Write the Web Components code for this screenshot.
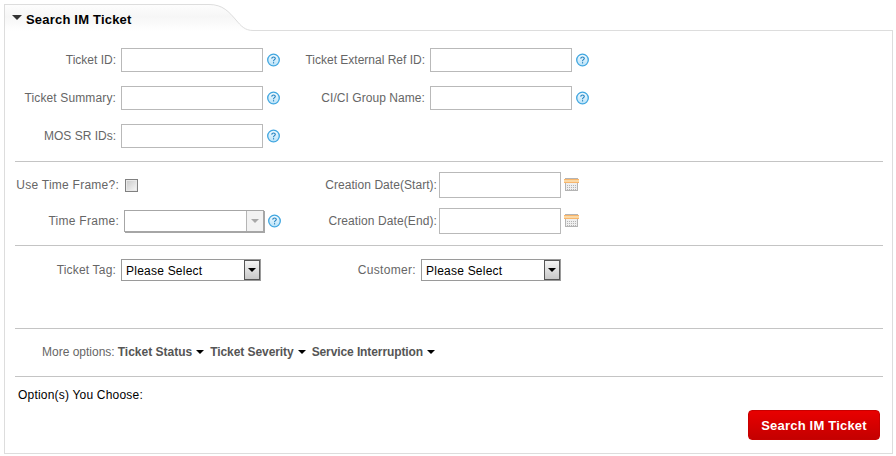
<!DOCTYPE html>
<html>
<head>
<meta charset="utf-8">
<title>Search IM Ticket</title>
<style>
  html, body { margin: 0; background: #fff; }
  body { font: 12px "Liberation Sans", Arial, sans-serif; color: #666; }
</style>
</head>
<body>
<im-panel heading="Search IM Ticket">
  <im-section style="--pad: 17px 0 13px; --gap: 14px">
    <im-row>
      <im-field label="Ticket ID:" style="--w: 101px"><im-input></im-input><im-help></im-help></im-field>
      <im-field label="Ticket External Ref ID:" style="--w: 125px; --left: 20px"><im-input></im-input><im-help></im-help></im-field>
    </im-row>
    <im-row>
      <im-field label="Ticket Summary:" style="--w: 101px; --ls: .13px"><im-input></im-input><im-help></im-help></im-field>
      <im-field label="CI/CI Group Name:" style="--w: 125px; --left: 20px; --ls: .06px"><im-input></im-input><im-help></im-help></im-field>
    </im-row>
    <im-row>
      <im-field label="MOS SR IDs:" style="--w: 101px"><im-input></im-input><im-help></im-help></im-field>
    </im-row>
  </im-section>
  <im-section style="--pad: 10px 0 11px; --gap: 10px">
    <im-row>
      <im-field label="Use Time Frame?:" style="--w: 104px; --fw: 267px; --cgap: 6px; --ls: .25px"><im-check></im-check></im-field>
      <im-field label="Creation Date(Start):" style="--w: 121px; --left: 34px; --cgap: 2px; --ls: .05px"><im-input style="--iw: 122px; --ih: 26px"></im-input><im-calendar></im-calendar></im-field>
    </im-row>
    <im-row>
      <im-field label="Time Frame:" style="--w: 104px; --fw: 267px; --ls: .27px"><im-select disabled style="--sw: 140px; --sh: 22px"></im-select><im-help></im-help></im-field>
      <im-field label="Creation Date(End):" style="--w: 121px; --left: 34px; --cgap: 2px; --ls: .1px"><im-input style="--iw: 122px; --ih: 26px"></im-input><im-calendar></im-calendar></im-field>
    </im-row>
  </im-section>
  <im-section style="--pad: 13px 0 47px; --gap: 0px">
    <im-row>
      <im-field label="Ticket Tag:" style="--w: 101px; --fw: 246px; --ls: .18px"><im-select text="Please Select"></im-select></im-field>
      <im-field label="Customer:" style="--w: 155px; --ls: .33px"><im-select text="Please Select"></im-select></im-field>
    </im-row>
  </im-section>
  <im-section style="--pad: 15px 0 16px; --gap: 0px">
    <im-more label="More options:">
      <im-menu>Ticket Status</im-menu>
      <im-menu style="--ls: -.07px">Ticket Severity</im-menu>
      <im-menu style="--ls: -.1px">Service Interruption</im-menu>
    </im-more>
  </im-section>
  <im-footer label="Option(s) You Choose:">
    <im-button>Search IM Ticket</im-button>
  </im-footer>
</im-panel>

<script>
class ImPanel extends HTMLElement {
  constructor() {
    super();
    this.attachShadow({ mode: 'open' }).innerHTML = `
      <style>
        :host { display: block; margin: 4px 3px 0 4px; width: 889px; }
        .head { display: flex; height: 27px; }
        .tab {
          width: 205px; box-sizing: border-box; padding: 7px 0 0 7px;
          border-top: 1px solid #ddd; border-left: 1px solid #ddd;
          background: linear-gradient(#fdfdfd, #f6f6f6 45%, #fff);
          font-weight: bold; font-size: 13px; color: #000; letter-spacing: .2px;
          display: flex; gap: 4px; white-space: nowrap;
        }
        .tab i {
          width: 0; height: 0; margin-top: 3px;
          border: 5px solid transparent; border-top: 5px solid #333; border-bottom: 0;
        }
        .curve { display: block; width: 44px; height: 27px; flex: none; }
        .rest { flex: 1; border-bottom: 1px solid #ddd; }
        .body {
          border: 1px solid #ddd; border-top: 0;
          padding: 0 9px 0 10px; height: 423px; box-sizing: border-box;
        }
      </style>
      <div class="head">
        <div class="tab"><i></i><span id="t"></span></div>
        <svg class="curve" viewBox="0 0 44 27">
          <defs><linearGradient id="g" x1="0" y1="0" x2="0" y2="1">
            <stop offset="0" stop-color="#fdfdfd"/><stop offset=".45" stop-color="#f6f6f6"/><stop offset="1" stop-color="#fff"/>
          </linearGradient></defs>
          <path d="M0 .5C14 .5 20 8 27 16C32 22 36 26.500 44 26.500V27H0Z" fill="url(#g)"/>
          <path d="M0 .5C14 .5 20 8 27 16C32 22 36 26.500 44 26.500" fill="none" stroke="#ddd"/>
        </svg>
        <div class="rest"></div>
      </div>
      <div class="body"><slot></slot></div>`;
    this.shadowRoot.getElementById('t').textContent = this.getAttribute('heading');
  }
}

class ImSection extends HTMLElement {
  constructor() {
    super();
    this.attachShadow({ mode: 'open' }).innerHTML = `
      <style>
        :host {
          display: flex; flex-direction: column; gap: var(--gap);
          padding: var(--pad); border-bottom: 1px solid #c4c4c4;
        }
      </style>
      <slot></slot>`;
  }
}

class ImRow extends HTMLElement {
  constructor() {
    super();
    this.attachShadow({ mode: 'open' }).innerHTML = `
      <style>:host { display: flex; align-items: center; }</style>
      <slot></slot>`;
  }
}

class ImField extends HTMLElement {
  constructor() {
    super();
    this.attachShadow({ mode: 'open' }).innerHTML = `
      <style>
        :host {
          display: flex; align-items: center; flex: none;
          width: var(--fw, auto); margin-left: var(--left, 0);
        }
        label {
          width: var(--w); flex: none; text-align: right; white-space: nowrap;
          margin-right: var(--cgap, 5px); letter-spacing: var(--ls, 0);
        }
        .ctl { display: flex; align-items: center; gap: 4px; }
      </style>
      <label></label><div class="ctl"><slot></slot></div>`;
    this.shadowRoot.querySelector('label').textContent = this.getAttribute('label');
  }
}

class ImInput extends HTMLElement {
  constructor() {
    super();
    this.attachShadow({ mode: 'open' }).innerHTML = `
      <style>
        :host {
          display: block; box-sizing: border-box; flex: none;
          width: var(--iw, 142px); height: var(--ih, 24px);
          border: 1px solid #b9b9b9; background: #fff;
        }
      </style>`;
  }
}

class ImHelp extends HTMLElement {
  constructor() {
    super();
    this.attachShadow({ mode: 'open' }).innerHTML = `
      <style>:host { display: block; width: 13px; height: 14px; flex: none; } svg { display: block; }</style>
      <svg width="13" height="14" viewBox="0 0 13 14">
        <defs><linearGradient id="h" x1="0" y1="0" x2="0" y2="1">
          <stop offset="0" stop-color="#f4fbff"/><stop offset="1" stop-color="#b9e2f8"/>
        </linearGradient></defs>
        <circle cx="6.500" cy="7" r="5.800" fill="url(#h)" stroke="#3fa6e0" stroke-width="1.300"/>
        <path d="M4.700 5.600C4.800 4.500 5.500 4 6.500 4C7.600 4 8.300 4.600 8.300 5.500C8.300 6.700 6.500 6.700 6.500 8.200" fill="none" stroke="#1f7fbe" stroke-width="1.100"/>
        <rect x="6" y="9.200" width="1.100" height="1.200" fill="#1f7fbe"/>
      </svg>`;
  }
}

class ImCalendar extends HTMLElement {
  constructor() {
    super();
    this.attachShadow({ mode: 'open' }).innerHTML = `
      <style>:host { display: block; width: 15px; height: 13px; flex: none; margin: -1px 0 0 -1px; } svg { display: block; }</style>
      <svg width="15" height="13" viewBox="0 0 15 13" shape-rendering="crispEdges">
        <rect x="1.500" y=".5" width="12" height="12" fill="#efefef" stroke="#b4b4b4"/>
        <rect x="0" y="1" width="15" height="4" fill="#fbd9a6"/>
        <rect x="0" y="1" width="15" height="1" fill="#f8b66c"/>
        <rect x="0" y="4" width="15" height="1" fill="#f8b66c"/>
        <path d="M3 7h9M3 9h9M3 11h9" stroke="#b4b4b4" stroke-dasharray="1 1"/>
      </svg>`;
  }
}

class ImCheck extends HTMLElement {
  constructor() {
    super();
    this.attachShadow({ mode: 'open' }).innerHTML = `
      <style>
        :host {
          display: block; box-sizing: border-box; width: 13px; height: 13px;
          border: 1px solid #808080; background: linear-gradient(135deg, #c8c8c8, #f8f8f8);
          box-shadow: inset 0 0 0 1px #e8e8e8;
        }
      </style>`;
  }
}

class ImSelect extends HTMLElement {
  constructor() {
    super();
    const off = this.hasAttribute('disabled');
    this.attachShadow({ mode: 'open' }).innerHTML = `
      <style>
        :host {
          display: flex; box-sizing: border-box; flex: none;
          width: var(--sw, 140px); height: var(--sh, 22px);
          border: 1px solid ${off ? '#a6a6a6' : '#9a9a9a'}; background: #fff;
          color: #000; font-size: 12px; align-items: center;
          ${off ? 'box-shadow: 1px 1px 0 #a6a6a6;' : ''}
        }
        span { flex: 1; padding: 1px 0 0 4px; white-space: nowrap; letter-spacing: .23px; }
        b {
          width: ${off ? '17px' : '16px'}; align-self: stretch; flex: none; box-sizing: border-box;
          display: flex; align-items: center; justify-content: center;
          border: ${off ? '0 solid #b5b5b5' : '1px solid #555'};
          border-left-width: 1px;
          background: ${off ? '#f2f2f2' : 'linear-gradient(#f4f4f4, #c9c9c9)'};
        }
        b i {
          width: 0; height: 0;
          border: 4px solid transparent; border-bottom: 0;
          border-top: 4px solid ${off ? '#a8a8a8' : '#000'};
        }
      </style>
      <span></span><b><i></i></b>`;
    this.shadowRoot.querySelector('span').textContent = this.getAttribute('text') || '';
  }
}

class ImMore extends HTMLElement {
  constructor() {
    super();
    this.attachShadow({ mode: 'open' }).innerHTML = `
      <style>
        :host { display: flex; align-items: center; padding-left: 27px; line-height: 16px; }
        span { margin-right: 3px; }
        div { display: flex; gap: 6px; }
      </style>
      <span></span><div><slot></slot></div>`;
    this.shadowRoot.querySelector('span').textContent = this.getAttribute('label');
  }
}

class ImMenu extends HTMLElement {
  constructor() {
    super();
    this.attachShadow({ mode: 'open' }).innerHTML = `
      <style>
        :host {
          display: flex; align-items: center; gap: 4px; font-weight: bold; color: #555;
          margin-top: -1px; letter-spacing: var(--ls, 0);
        }
        i { width: 0; height: 0; border: 4px solid transparent; border-bottom: 0; border-top: 4px solid #000; }
      </style>
      <slot></slot><i></i>`;
  }
}

class ImFooter extends HTMLElement {
  constructor() {
    super();
    this.attachShadow({ mode: 'open' }).innerHTML = `
      <style>
        :host { display: block; padding: 11px 3px 0; color: #000; }
        p { margin: 0; line-height: 14px; letter-spacing: .2px; }
        div { display: flex; justify-content: flex-end; margin-top: 8px; }
      </style>
      <p></p><div><slot></slot></div>`;
    this.shadowRoot.querySelector('p').textContent = this.getAttribute('label');
  }
}

class ImButton extends HTMLElement {
  constructor() {
    super();
    this.attachShadow({ mode: 'open' }).innerHTML = `
      <style>
        :host {
          display: flex; align-items: center; justify-content: center;
          width: 132px; height: 30px; box-sizing: border-box; border-radius: 4px;
          background: linear-gradient(#e80000, #c40000); border: 1px solid #c80000;
          color: #fff; font-weight: bold; font-size: 13px; letter-spacing: .2px;
        }
      </style>
      <slot></slot>`;
  }
}

customElements.define('im-panel', ImPanel);
customElements.define('im-section', ImSection);
customElements.define('im-row', ImRow);
customElements.define('im-field', ImField);
customElements.define('im-input', ImInput);
customElements.define('im-help', ImHelp);
customElements.define('im-calendar', ImCalendar);
customElements.define('im-check', ImCheck);
customElements.define('im-select', ImSelect);
customElements.define('im-more', ImMore);
customElements.define('im-menu', ImMenu);
customElements.define('im-footer', ImFooter);
customElements.define('im-button', ImButton);
</script>
</body>
</html>
